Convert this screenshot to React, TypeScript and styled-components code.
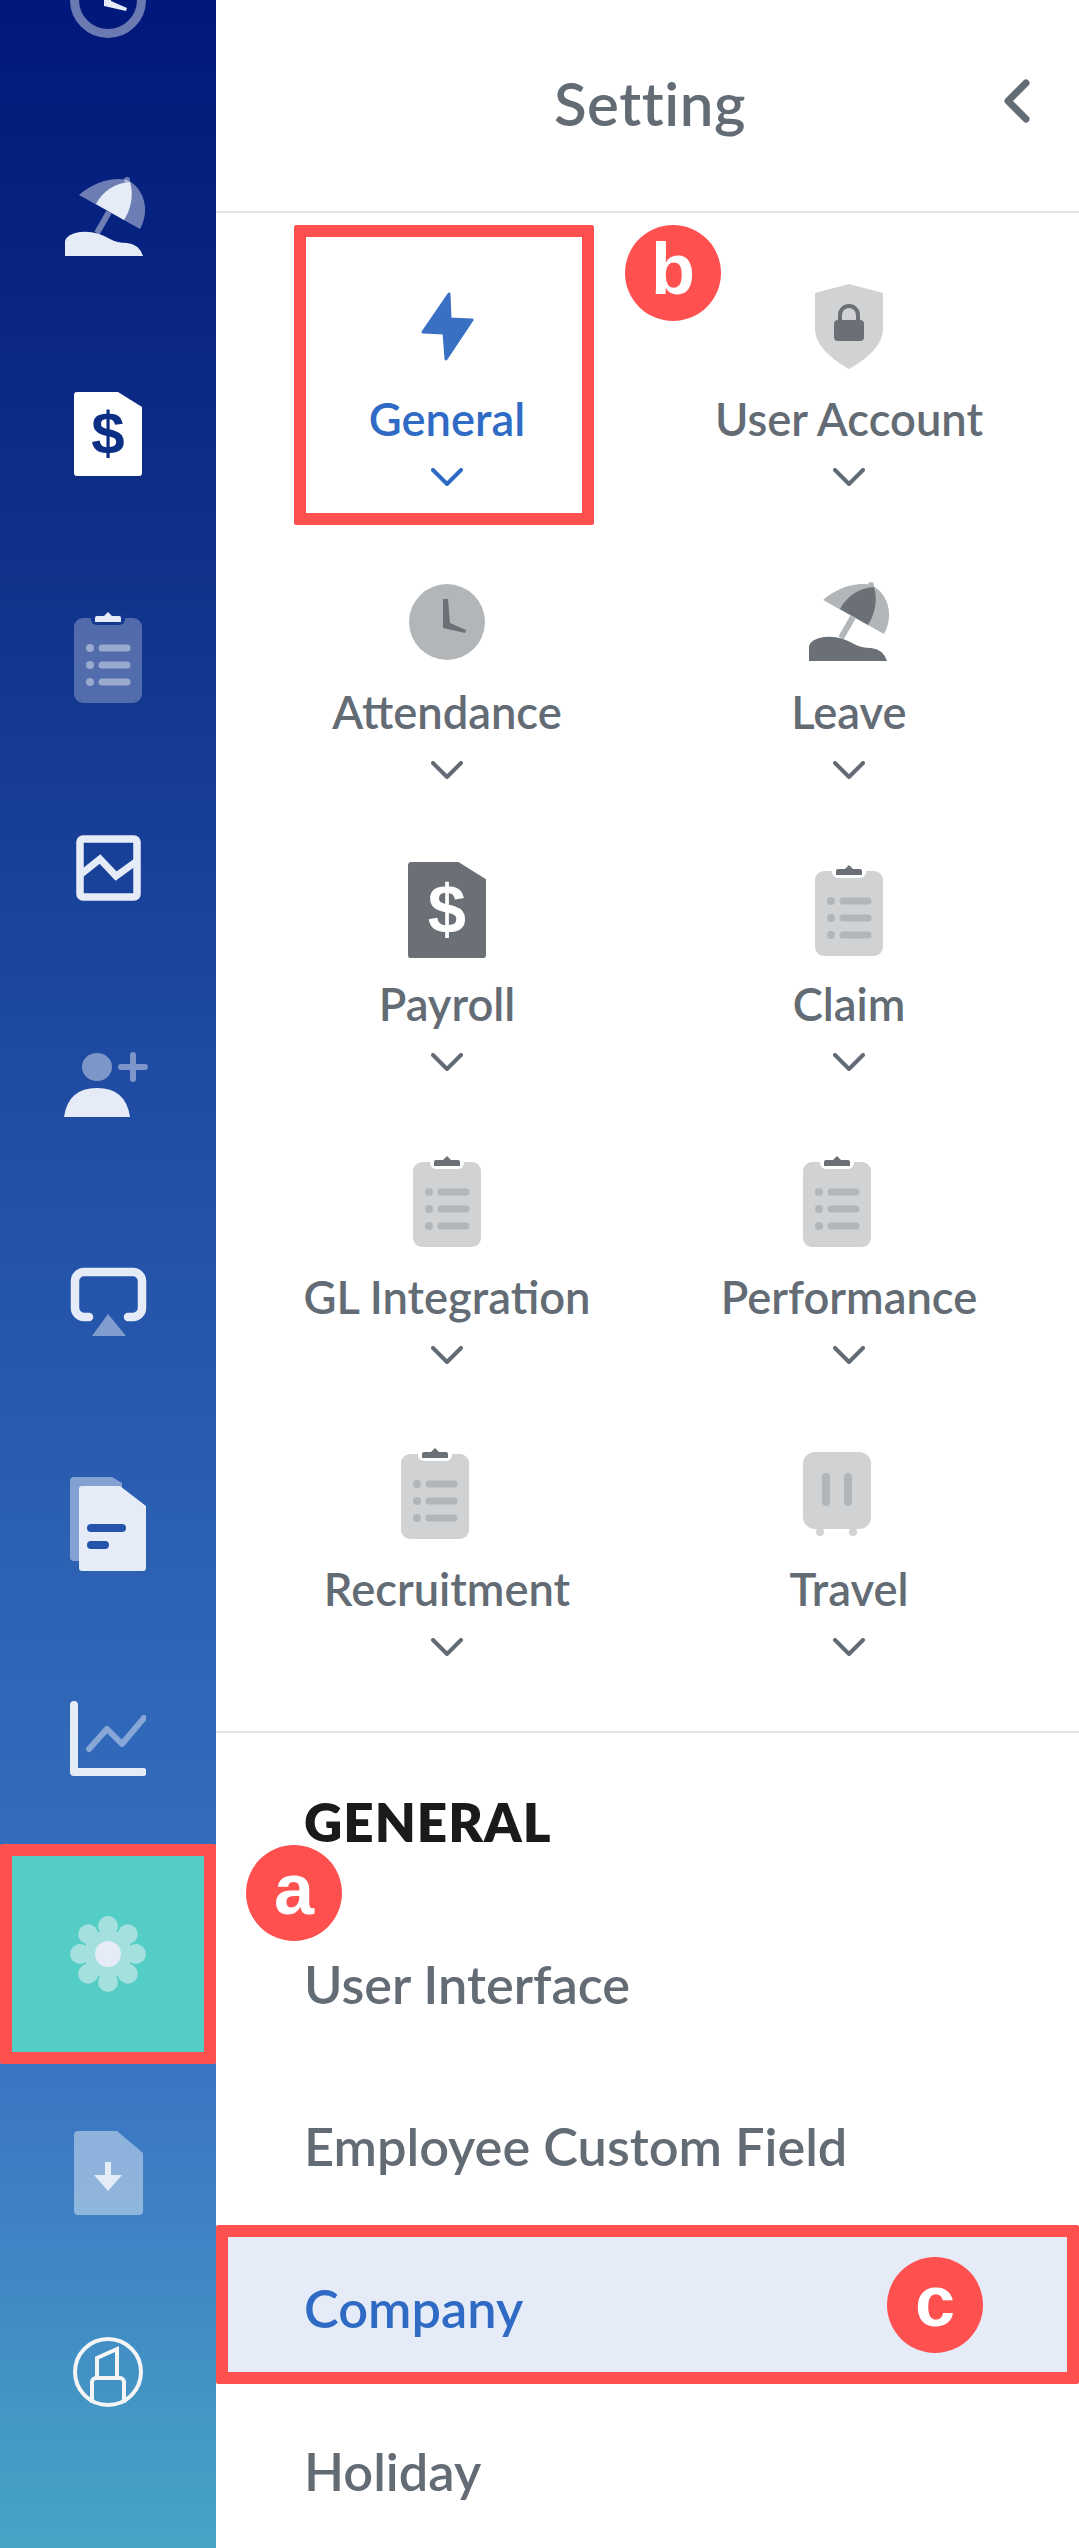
import React from "react";
import styled, { createGlobalStyle } from "styled-components";

const Global = createGlobalStyle`
  html, body { margin: 0; padding: 0; background: #fff; }
  *, *::before, *::after { box-sizing: border-box; }
`;

const Shell = styled.div`
  position: relative;
  display: flex;
  width: 1079px;
  height: 2548px;
  overflow: hidden;
  font-family: Lato, "Liberation Sans", sans-serif;
  background: #fff;
`;

const Sidebar = styled.nav`
  flex: 0 0 216px;
  height: 100%;
  overflow: hidden;
  background: linear-gradient(180deg, #00187a 0%, #0f3189 22%, #1f4ba2 42%, #2f66b8 66%, #3a76c2 82%, #3f84c4 88%, #47a5c6 100%);
`;

const NavList = styled.div`
  display: flex;
  flex-direction: column;
  margin-top: -109px;
`;

const NavItem = styled.div<{ $h?: number; $active?: boolean; $dx?: number; $dy?: number }>`
  display: flex;
  align-items: center;
  justify-content: center;
  height: ${(p) => p.$h ?? 217}px;
  padding-top: ${(p) => (p.$dy ?? 0) * 2}px;
  padding-right: ${(p) => (p.$dx ?? 0) * 2}px;
  ${(p) => p.$active && "background: #53cdc5; border: 12px solid #ff5050; border-radius: 2px;"}
`;

const Main = styled.main`
  flex: 1;
  min-width: 0;
  display: flex;
  flex-direction: column;
`;

const Header = styled.header`
  display: grid;
  grid-template-columns: 1fr auto 1fr;
  align-items: center;
  height: 213px;
  border-bottom: 2px solid #e2e3e5;
`;

const Title = styled.h1`
  grid-column: 2;
  margin: -6px 0 0 5px;
  font-size: 60px;
  font-weight: 600;
  line-height: 1;
  letter-spacing: 0.6px;
  color: #636b74;
`;

const BackIcon = styled.svg`
  justify-self: end;
  margin: -10px 49px 0 0;
`;

const Modules = styled.div`
  display: grid;
  grid-template-columns: 402px 402px;
  row-gap: 85.5px;
  padding: 66px 29px 75px 30px;
`;

const Module = styled.div<{ $active?: boolean; $boxed?: boolean }>`
  position: relative;
  display: flex;
  flex-direction: column;
  align-items: center;
  color: ${(p) => (p.$active ? "#2f6bc4" : "#636b74")};
  ${(p) =>
    p.$boxed &&
    `&::after {
      content: "";
      position: absolute;
      left: 48px;
      top: -54px;
      width: 300px;
      height: 300px;
      border: 12px solid #ff5050;
      border-radius: 2px;
    }`}
`;

const IconSlot = styled.div<{ $up?: number; $left?: number }>`
  display: flex;
  align-items: center;
  justify-content: center;
  height: 100px;
  padding-bottom: ${(p) => (p.$up ?? 0) * 2}px;
  margin-right: ${(p) => (p.$left ?? 0) * 2}px;
`;

const ModuleLabel = styled.div`
  margin-top: 9px;
  height: 62px;
  font-size: 45.3px;
  font-weight: 600;
  line-height: 62px;
  white-space: nowrap;
`;

const Chevron = styled.svg`
  display: block;
  margin-top: 18px;
`;

const SubMenu = styled.section`
  flex: 1;
  border-top: 2px solid #e2e3e5;
`;

const SubTitle = styled.h2`
  margin: 0;
  padding: 59px 0 0 88px;
  height: 172px;
  font-size: 53px;
  font-weight: 800;
  line-height: 60px;
  letter-spacing: 1px;
  color: #1a1a1a;
`;

const SubList = styled.ul`
  list-style: none;
  margin: 0;
  padding: 0;
`;

const SubItem = styled.li<{ $active?: boolean }>`
  display: flex;
  align-items: center;
  height: ${(p) => (p.$active ? 159 : 160)}px;
  padding-left: ${(p) => (p.$active ? 76 : 88)}px;
  padding-top: ${(p) => (p.$active ? 6 : 0)}px;
  font-size: 52.3px;
  font-weight: 600;
  color: ${(p) => (p.$active ? "#2f6bc4" : "#636b74")};
  ${(p) => p.$active && "background: #e6ecf7; border: 12px solid #ff5050; border-radius: 2px;"}
  &:first-child {
    padding-bottom: 4px;
  }
  &:last-child {
    padding-top: 12px;
  }
`;

const Badge = styled.div<{ $x: number; $y: number }>`
  position: absolute;
  left: ${(p) => p.$x}px;
  top: ${(p) => p.$y}px;
  display: flex;
  align-items: center;
  justify-content: center;
  width: 96px;
  height: 96px;
  padding-bottom: 8px;
  border-radius: 50%;
  background: #ff5050;
  color: #fff;
  font-family: "Liberation Sans", Arial, sans-serif;
  font-size: 72px;
  font-weight: 700;
  line-height: 1;
`;

type Tone = { a: string; b: string; c: string; cut: string };

const side: Tone = { a: "#e6ecf7", b: "rgba(255,255,255,.42)", c: "rgba(255,255,255,.27)", cut: "#14378e" };
const gray: Tone = { a: "#6b7077", b: "#b2b6b9", c: "#d0d2d4", cut: "#fff" };

const Clock = ({ t, ring }: { t: Tone; ring?: boolean }) => (
  <svg width="76" height="76" viewBox="0 0 76 76">
    {ring ? (
      <circle cx="38" cy="38" r="33.5" fill="none" stroke={t.b} strokeWidth="9" />
    ) : (
      <circle cx="38" cy="38" r="38" fill={t.b} />
    )}
    <path d="M34 15h5l2 24 16 7-1 3-22-5z" fill={t.a} />
  </svg>
);

const Umbrella = ({ t }: { t: Tone }) => (
  <svg width="81" height="79" viewBox="0 0 81 79">
    <path d="M44 35L32 56" stroke={t.b} strokeWidth="6" />
    <circle cx="62" cy="3" r="3" fill={t.b} />
    <path d="M14 18C30 4 50 0 62 3C78 10 86 32 75 52Z" fill={t.b} />
    <path d="M31 27C38 14 50 6 65 5C69 18 66 32 59 43Z" fill={t.a} />
    <path d="M0 79V64Q2 57 15 55Q30 53 45 62Q52 66 62 66Q74 67 78 79Z" fill={t.a} />
  </svg>
);

const DollarDoc = ({ w, fill, ink }: { w: number; fill: string; ink: string }) => (
  <svg width={w} height={(w * 84) / 68} viewBox="0 0 68 84">
    <path d="M3 0H44L68 15V81a3 3 0 0 1-3 3H3a3 3 0 0 1-3-3V3a3 3 0 0 1 3-3Z" fill={fill} />
    <text x="34" y="62" textAnchor="middle" fontFamily="Liberation Sans" fontWeight="700" fontSize="60" fill={ink}>
      $
    </text>
  </svg>
);

const Clipboard = ({ t, light }: { t: Tone; light?: boolean }) => (
  <svg width="68" height="92" viewBox="0 0 68 92">
    <rect x="0" y="7" width="68" height="85" rx="9" fill={t.c} />
    <rect x="17" y="-6" width="34" height="20" rx="6" fill={t.cut} />
    <path d="M21 11V7a2 2 0 0 1 2-2H30L34 1L38 5H45a2 2 0 0 1 2 2V11Z" fill={light ? "#e6ecf7" : t.a} />
    {[37, 54, 71].map((y) => (
      <g key={y}>
        <circle cx="16" cy={y} r="4" fill={t.b} />
        <path d={`M28 ${y}H53`} stroke={t.b} strokeWidth="7" strokeLinecap="round" />
      </g>
    ))}
  </svg>
);

const Bolt = () => (
  <svg width="53" height="69" viewBox="0 0 53 69">
    <path d="M28 2L2 40L23 41L25 67L51 28L29 27Z" fill="#3a70c4" stroke="#3a70c4" strokeWidth="3" strokeLinejoin="round" />
  </svg>
);

const Shield = () => (
  <svg width="68" height="85" viewBox="0 0 68 85">
    <path d="M34 0L68 9V45C68 62 50 76 34 85C18 76 0 62 0 45V9Z" fill="#d0d2d4" />
    <path d="M25 38V31a9 9 0 0 1 18 0V38" fill="none" stroke="#6b7077" strokeWidth="4" />
    <rect x="19" y="36" width="30" height="21" rx="4" fill="#6b7077" />
  </svg>
);

const Suitcase = () => (
  <svg width="68" height="84" viewBox="0 0 68 84">
    <circle cx="17" cy="80" r="4" fill="#d0d2d4" />
    <circle cx="50" cy="80" r="4" fill="#d0d2d4" />
    <rect x="0" y="0" width="68" height="77" rx="12" fill="#d0d2d4" />
    <path d="M23 25V50M45 25V50" stroke="#b2b6b9" strokeWidth="8" strokeLinecap="round" />
  </svg>
);

const ChartBox = ({ t }: { t: Tone }) => (
  <svg width="65" height="66" viewBox="0 0 65 66">
    <rect x="4" y="4" width="57" height="58" rx="3" fill="none" stroke={t.a} strokeWidth="7.5" />
    <path d="M4 40L24 24L40 41L61 26" fill="none" stroke={t.a} strokeWidth="7" />
  </svg>
);

const PersonPlus = ({ t }: { t: Tone }) => (
  <svg width="84" height="65" viewBox="0 0 84 65">
    <ellipse cx="33" cy="15" rx="15" ry="14" fill={t.b} />
    <path d="M0 65Q4 36 33 36Q62 36 66 65Z" fill={t.a} />
    <path d="M57 15H81M69 3V27" stroke={t.b} strokeWidth="6" strokeLinecap="round" />
  </svg>
);

const Airplay = ({ t }: { t: Tone }) => (
  <svg width="77" height="69" viewBox="0 0 77 69">
    <path d="M19 50H14a9 9 0 0 1-9-9V14a9 9 0 0 1 9-9H63a9 9 0 0 1 9 9V41a9 9 0 0 1-9 9H58" fill="none" stroke={t.a} strokeWidth="8.5" strokeLinecap="round" />
    <path d="M38 47L56 69H22Z" fill={t.b} />
  </svg>
);

const Files = ({ t }: { t: Tone }) => (
  <svg width="76" height="94" viewBox="0 0 76 94">
    <path d="M4 0H42L52 6V84H4a4 4 0 0 1-4-4V4a4 4 0 0 1 4-4Z" fill={t.b} />
    <path d="M12 9H50L76 29V91a3 3 0 0 1-3 3H12a3 3 0 0 1-3-3V12a3 3 0 0 1 3-3Z" fill={t.a} />
    <path d="M21 51H52M21 68H35" stroke="#2353aa" strokeWidth="8" strokeLinecap="round" />
  </svg>
);

const LineChart = ({ t }: { t: Tone }) => (
  <svg width="76" height="75" viewBox="0 0 76 75">
    <path d="M19 48L37 28L52 43L74 17" fill="none" stroke={t.b} strokeWidth="6" strokeLinecap="round" strokeLinejoin="round" />
    <path d="M4 4V71H73" fill="none" stroke={t.a} strokeWidth="8" strokeLinecap="round" strokeLinejoin="round" />
  </svg>
);

const Gear = () => {
  const petals = Array.from({ length: 8 }, (_, i) => (i * Math.PI) / 4);
  return (
    <svg width="76" height="76" viewBox="0 0 76 76">
      <circle cx="38" cy="38" r="24" fill="#a3e0de" />
      {petals.map((r) => (
        <circle key={r} cx={38 + 28 * Math.cos(r)} cy={38 + 28 * Math.sin(r)} r="10" fill="#a3e0de" />
      ))}
      <ellipse cx="38" cy="38" rx="13" ry="13" fill="#e6ecf7" />
    </svg>
  );
};

const DownloadDoc = ({ t }: { t: Tone }) => (
  <svg width="69" height="84" viewBox="0 0 69 84">
    <path d="M4 0H43L69 22V80a4 4 0 0 1-4 4H4a4 4 0 0 1-4-4V4a4 4 0 0 1 4-4Z" fill={t.b} />
    <path d="M31 31h6v13h11L34 60L20 44h11Z" fill={t.a} />
  </svg>
);

const Lipstick = () => (
  <svg width="70" height="70" viewBox="0 0 70 70">
    <circle cx="35" cy="35" r="33" fill="none" stroke="#f5f5f5" strokeWidth="4" />
    <path d="M24 41V21L44 12V41" fill="none" stroke="#f5f5f5" strokeWidth="4" />
    <path d="M19 66V45a4 4 0 0 1 4-4H47a4 4 0 0 1 4 4V66" fill="none" stroke="#f5f5f5" strokeWidth="4" />
  </svg>
);

const navItems: { icon: React.ReactNode; h?: number; active?: boolean; dx?: number; dy?: number }[] = [
  { icon: <Clock t={side} ring /> },
  { icon: <Umbrella t={side} />, dx: 3 },
  { icon: <DollarDoc w={68} fill="#fff" ink="#0d2e85" /> },
  { icon: <Clipboard t={side} light />, dy: 6 },
  { icon: <ChartBox t={side} /> },
  { icon: <PersonPlus t={side} />, dx: 2 },
  { icon: <Airplay t={side} /> },
  { icon: <Files t={side} />, dy: 5 },
  { icon: <LineChart t={side} />, dy: 3 },
  { icon: <Gear />, h: 220, active: true },
  { icon: <DownloadDoc t={side} /> },
  { icon: <Lipstick />, h: 182 },
];

const modules: { label: string; icon: React.ReactNode; active?: boolean; boxed?: boolean; up?: number; left?: number }[] = [
  { label: "General", icon: <Bolt />, active: true, boxed: true, up: 3 },
  { label: "User Account", icon: <Shield />, up: 3 },
  { label: "Attendance", icon: <Clock t={gray} /> },
  { label: "Leave", icon: <Umbrella t={gray} /> },
  { label: "Payroll", icon: <DollarDoc w={78} fill="#6b7077" ink="#fff" />, up: 4 },
  { label: "Claim", icon: <Clipboard t={gray} />, up: 4 },
  { label: "GL Integration", icon: <Clipboard t={gray} />, up: 6 },
  { label: "Performance", icon: <Clipboard t={gray} />, up: 6, left: 12 },
  { label: "Recruitment", icon: <Clipboard t={gray} />, up: 6, left: 12 },
  { label: "Travel", icon: <Suitcase />, up: 5, left: 12 },
];

const subItems = ["User Interface", "Employee Custom Field", "Company", "Holiday"];

export default function App() {
  return (
    <Shell>
      <Global />
      <Sidebar>
        <NavList>
          {navItems.map((n, i) => (
            <NavItem key={i} $h={n.h} $active={n.active} $dx={n.dx} $dy={n.dy}>
              {n.icon}
            </NavItem>
          ))}
        </NavList>
      </Sidebar>
      <Main>
        <Header>
          <Title>Setting</Title>
          <BackIcon width="27" height="44" viewBox="0 0 27 44">
            <path d="M23 4L5 22L23 40" fill="none" stroke="#636b74" strokeWidth="7" strokeLinecap="round" strokeLinejoin="round" />
          </BackIcon>
        </Header>
        <Modules>
          {modules.map((m) => (
            <Module key={m.label} $active={m.active} $boxed={m.boxed}>
              <IconSlot $up={m.up} $left={m.left}>{m.icon}</IconSlot>
              <ModuleLabel>{m.label}</ModuleLabel>
              <Chevron width="32" height="18" viewBox="0 0 32 18">
                <path d="M2 2L16 16L30 2" fill="none" stroke="currentColor" strokeWidth="4" strokeLinecap="round" strokeLinejoin="round" />
              </Chevron>
            </Module>
          ))}
        </Modules>
        <SubMenu>
          <SubTitle>GENERAL</SubTitle>
          <SubList>
            {subItems.map((s) => (
              <SubItem key={s} $active={s === "Company"}>
                {s}
              </SubItem>
            ))}
          </SubList>
        </SubMenu>
      </Main>
      <Badge $x={246} $y={1845}>a</Badge>
      <Badge $x={625} $y={225}>b</Badge>
      <Badge $x={887} $y={2257}>c</Badge>
    </Shell>
  );
}
